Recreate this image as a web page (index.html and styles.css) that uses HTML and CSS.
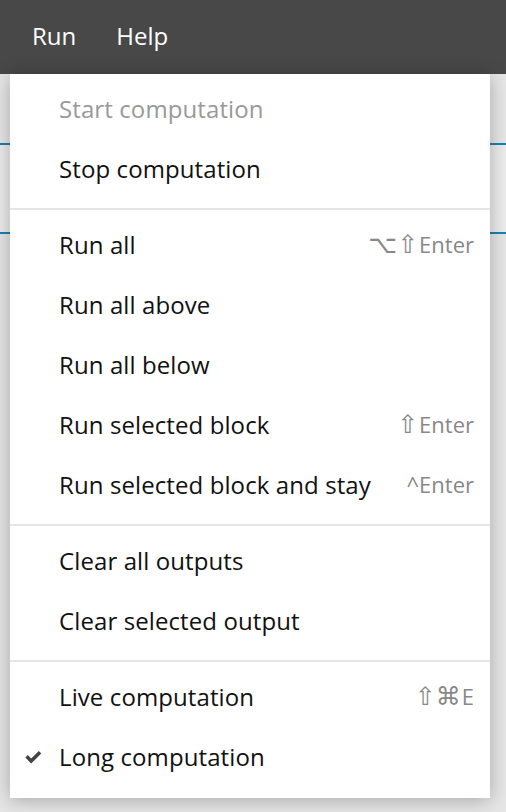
FILE: index.html
```html
<!doctype html>
<html><head>
  <title>Run menu</title>
  <meta charset="utf-8">
  <link rel="stylesheet" href="styles.css">
</head><body>
  <header class="topbar">
    <span class="topbar-item">Run</span>
    <span class="topbar-item">Help</span>
  </header>
  <main class="page">
    <div class="cell"></div>
  </main>

  <div class="menu">
    <div class="menu-group">
      <div class="menu-item disabled"><span class="label">Start computation</span></div>
      <div class="menu-item"><span class="label">Stop computation</span></div>
    </div>
    <div class="menu-group">
      <div class="menu-item"><span class="label">Run all</span><span class="keys"><span class="sym">&#x2325;&#x21E7;</span>Enter</span></div>
      <div class="menu-item"><span class="label">Run all above</span></div>
      <div class="menu-item"><span class="label">Run all below</span></div>
      <div class="menu-item"><span class="label">Run selected block</span><span class="keys"><span class="sym">&#x21E7;</span>Enter</span></div>
      <div class="menu-item"><span class="label">Run selected block and stay</span><span class="keys">^Enter</span></div>
    </div>
    <div class="menu-group">
      <div class="menu-item"><span class="label">Clear all outputs</span></div>
      <div class="menu-item"><span class="label">Clear selected output</span></div>
    </div>
    <div class="menu-group last">
      <div class="menu-item"><span class="label">Live computation</span><span class="keys"><span class="sym">&#x21E7;&#x2318;</span>E</span></div>
      <div class="menu-item checked">
        <svg class="check" width="19" height="16" viewBox="0 0 19 16"><path d="M1.3 8.6 L3.8 6.1 L7.2 9.5 L14.8 1.9 L17.3 4.4 L7.2 14.5 Z" fill="#444"/></svg>
        <span class="label">Long computation</span>
      </div>
    </div>
  </div>
</body></html>
```

FILE: styles.css
```css
body {
	margin: 0;
	background: #e6e6e6;
	font: 24px 'Open Sans', 'Noto Sans', sans-serif;
	color: #111;
}

.topbar {
	height: 74px;
	background: #484848;
	display: flex;
	align-items: center;
	gap: 40px;
	padding: 0 0 0 32px;
	box-sizing: border-box;
}

.topbar-item {
	color: #fff;
	font-size: 24px;
	padding-bottom: 4px;
}

.page {
	padding-top: 69px;
}

.cell {
	height: 87px;
	border-top: 2px solid #1a80b6;
	border-bottom: 2px solid #1a80b6;
	background: #ececec;
}

.menu {
	position: absolute;
	top: 74px;
	left: 10px;
	width: 480px;
	background: #fff;
	box-shadow: 0 2px 18px rgba(0, 0, 0, 0.28);
}

.menu-group {
	padding: 5px 0 9px 0;
	border-top: 2px solid #e5e5e5;
}

.menu-group:first-child {
	border-top: none;
}

.menu-group.last {
	padding-bottom: 11px;
}

.menu-item {
	height: 60px;
	display: flex;
	align-items: center;
	padding: 0 16px 0 49px;
	position: relative;
}

.menu-item .label {
	flex: 1;
	padding-bottom: 2px;
	letter-spacing: 0.1px;
}

.menu-item.disabled {
	color: #999;
}

.keys {
	color: #888;
	font-size: 22px;
	padding-bottom: 2px;
}

.sym {
	font-family: 'DejaVu Sans', sans-serif;
	font-size: 25px;
	margin-right: 1px;
}

.check {
	position: absolute;
	left: 14px;
	top: 22px;
}
```
